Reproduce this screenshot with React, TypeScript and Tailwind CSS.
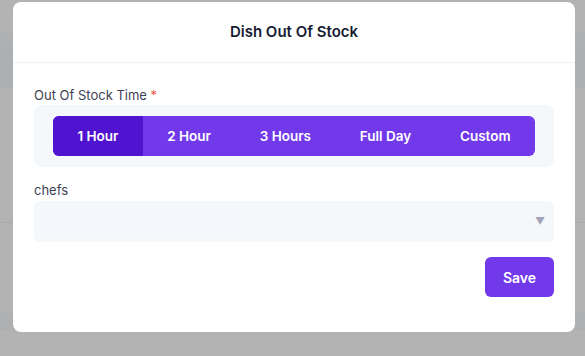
import { useState } from "react";

const options = ["1 Hour", "2 Hour", "3 Hours", "Full Day", "Custom"];

const App = () => {
  const [active, setActive] = useState(0);

  return (
    <div
      className="relative w-[585px] h-[356px] overflow-hidden bg-[#b3b3b3]"
      style={{ fontFamily: "Inter, 'Liberation Sans', sans-serif" }}
    >
      {/* page behind the overlay */}
      <div className="flex flex-col">
        <div className="h-[31px]" />
        <div className="h-[13px] bg-[#afb0b1]" />
        <div className="h-[44px] bg-[#adb0b2]" />
        <div className="h-[134px]" />
        <div className="h-px bg-[#a9a9a9]" />
        <div className="h-[90px]" />
        <div className="h-[17px] bg-[#aeb0b1]" />
      </div>

      {/* modal */}
      <div className="absolute left-[13px] top-[2px] w-[562px] h-[330px] bg-white rounded-lg flex flex-col">
        <div className="h-[61px] flex items-center justify-center border-b border-[#eff2f5]">
          <h2 className="text-[15px] font-semibold text-[#181c32]">Dish Out Of Stock</h2>
        </div>

        <div className="px-[21px] pt-[23px] flex flex-col">
          <label className="text-[13px] text-[#3f4254] leading-[19px]">
            Out Of Stock Time <span className="text-[#ef5b4c]">*</span>
          </label>
          <div className="h-[62px] bg-[#f5f8fa] rounded-lg flex items-center px-[19px]">
            <div className="flex h-[40px] w-[482px] bg-[#7239ea] rounded-md overflow-hidden">
              {options.map((o, i) => (
                <button
                  key={o}
                  onClick={() => setActive(i)}
                  className={
                    "flex-auto flex items-center justify-center text-[13.5px] font-semibold text-white " +
                    (i === active ? "bg-[#5014d0]" : "")
                  }
                >
                  {o}
                </button>
              ))}
            </div>
          </div>

          <label className="mt-[14px] text-[13px] text-[#3f4254] leading-[19px]">chefs</label>
          <div className="mt-[1px] h-[41px] bg-[#f5f8fa] rounded-md flex items-center px-[7px] relative">
            <div className="h-[24px] w-[200px] bg-[#f3f6fa] rounded" />
            <span className="absolute right-[9px] top-[13px] text-[10px] text-[#a1a5b7]">▼</span>
          </div>

          <div className="flex justify-end mt-[15px]">
            <button className="w-[69px] h-[40px] bg-[#7239ea] rounded-md text-white text-[14px] font-semibold">
              Save
            </button>
          </div>
        </div>
      </div>
    </div>
  );
};

export default App;
